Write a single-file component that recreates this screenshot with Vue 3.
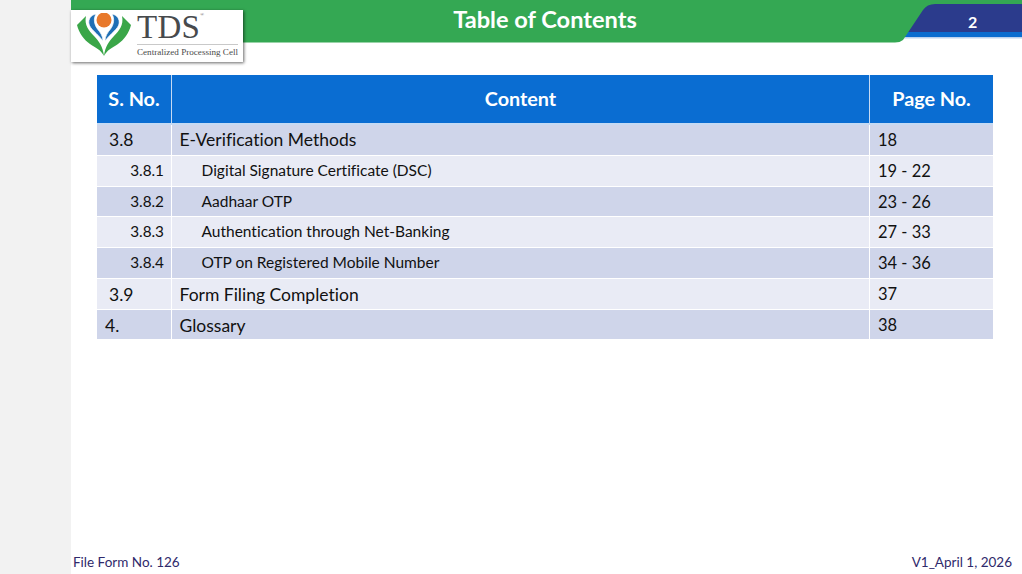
<script setup>
const rows = [
  { no: '3.8', text: 'E-Verification Methods', page: '18', kind: 'main', tone: 'dark' },
  { no: '3.8.1', text: 'Digital Signature Certificate (DSC)', page: '19 - 22', kind: 'sub', tone: 'light' },
  { no: '3.8.2', text: 'Aadhaar OTP', page: '23 - 26', kind: 'sub', tone: 'dark' },
  { no: '3.8.3', text: 'Authentication through Net-Banking', page: '27 - 33', kind: 'sub', tone: 'light' },
  { no: '3.8.4', text: 'OTP on Registered Mobile Number', page: '34 - 36', kind: 'sub', tone: 'dark' },
  { no: '3.9', text: 'Form Filing Completion', page: '37', kind: 'main low', tone: 'light' },
  { no: '4.', text: 'Glossary', page: '38', kind: 'top low', tone: 'dark' }
]
const sides = ['', 'matrix(-1 0 0 1 54 0)']
</script>

<template>
  <div class="page">
    <aside class="strip"></aside>
    <main class="slide">
      <header class="banner">
        <svg class="banner-art" width="951" height="43" viewBox="0 0 951 43">
          <path d="M0 0H951V4H0Z" fill="#34a853" />
          <path d="M830 32H951V37H830Z" fill="#0a6ccf" />
          <path d="M830 37H951V38.500H830Z" fill="#bcd2ee" />
          <path d="M834 32L852 4H951V32Z" fill="#2b3b8c" />
          <path d="M0 0H951V4H864Q856 4 852 10L832 40Q829 42.500 824 42.500H0Z" fill="#34a853" />
        </svg>
        <h1 class="title">Table of Contents</h1>
        <span class="page-no">2</span>
        <div class="logo">
          <svg class="logo-mark" width="54" height="44" viewBox="0 0 54 44">
            <g v-for="side in sides" :key="side" :transform="side">
              <path d="M0 12C3 9 6 6 9 3C7 12 12 18 17 23C22 28 26 34 27 43C24 37 19 35 13 31C7 27 2 20 0 12Z" fill="#3aa648" />
              <path d="M19 1C14 2 11 6 12 11C13 16 20 20 26 28C26 23 23 19 20.500 16C17.500 12 16 6 19 1Z" fill="#1f6fb5" stroke="#fff" stroke-width=".7" />
            </g>
            <circle cx="27" cy="7" r="7.500" fill="#e8792c" />
          </svg>
          <div class="logo-type">
            <span class="logo-tds">TDS<sup>®</sup></span>
            <span class="logo-sub">Centralized Processing Cell</span>
          </div>
        </div>
      </header>

      <section class="toc">
        <div class="toc-row toc-head">
          <div>S. No.</div>
          <div>Content</div>
          <div>Page No.</div>
        </div>
        <div v-for="row in rows" :key="row.no" class="toc-row" :class="[row.kind, row.tone]">
          <div class="cell-no">{{ row.no }}</div>
          <div class="cell-text">{{ row.text }}</div>
          <div class="cell-page">{{ row.page }}</div>
        </div>
      </section>

      <footer class="foot">
        <span>File Form No. 126</span>
        <span>V1_April 1, 2026</span>
      </footer>
    </main>
  </div>
</template>

<style>
html, body { margin: 0; background: #fff; }
</style>

<style scoped>
.page {
  display: flex;
  width: 1022px;
  height: 574px;
  overflow: hidden;
  font-family: Lato, "Open Sans", sans-serif;
  font-variant-ligatures: none;
  color: #111;
}
.strip { width: 71px; flex: none; background: #f2f2f2; }
.slide {
  flex: 1;
  display: flex;
  flex-direction: column;
  min-width: 0;
}
.banner { position: relative; height: 43px; flex: none; }
.banner-art { position: absolute; left: 0; top: 0; }
.title {
  position: relative;
  margin: 0;
  padding: 5px 3px 0 0;
  text-align: center;
  font-size: 23.600px;
  line-height: 28px;
  font-weight: 700;
  color: #fff;
}
.page-no {
  position: absolute;
  left: 897px;
  top: 13px;
  font-size: 16px;
  line-height: 18px;
  font-weight: 700;
  color: #fff;
}
.logo {
  position: absolute;
  left: 0;
  top: 10px;
  width: 172px;
  height: 52px;
  box-sizing: border-box;
  padding: 2px 0 0 6px;
  display: flex;
  gap: 6px;
  background: #fff;
  box-shadow: 1px 1px 3px rgba(0, 0, 0, .6);
  overflow: hidden;
}
.logo-mark { flex: none; margin-top: 1px; }
.logo-type { display: flex; flex-direction: column; }
.logo-tds {
  font-family: "Liberation Serif", serif;
  font-size: 33px;
  line-height: 31px;
  letter-spacing: .3px;
  color: #474a4d;
  border-bottom: 1px solid #c9c9c9;
  height: 32px;
}
.logo-tds sup { font-size: 5px; line-height: 0; vertical-align: 22px; }
.logo-sub {
  font-family: "Liberation Serif", serif;
  font-size: 9.100px;
  line-height: 14px;
  white-space: nowrap;
  color: #4a4a4a;
}
.toc {
  margin: 32px 0 0 26px;
  width: 896px;
  display: flex;
  flex-direction: column;
  gap: 1px;
}
.toc-row {
  display: grid;
  grid-template-columns: 74px 697px 123px;
  grid-template-rows: 100%;
  column-gap: 1px;
  height: 29.750px;
  font-size: 17.500px;
  line-height: 30px;
}
.toc-row > div { background: #e9ebf5; white-space: nowrap; overflow: hidden; }
.toc-row.dark > div { background: #cfd5ea; }
.toc-head {
  box-sizing: border-box;
  height: 50px;
  padding-bottom: 2px;
  margin-bottom: -1px;
  font-size: 19.800px;
  line-height: 47px;
  font-weight: 700;
  color: #fff;
  text-align: center;
  background: #c6daf3;
}
.toc-head > div { background: #0a6dd2; }
.cell-text { padding-left: 7.500px; }
.cell-page { padding-left: 8px; font-size: 16.500px; line-height: 31px; }
.main .cell-no { padding-left: 12px; }
.top .cell-no { padding-left: 8px; }
.low { line-height: 31px; }
.low .cell-page { line-height: 31px; }
.sub .cell-no { text-align: right; padding-right: 7px; font-size: 15.300px; line-height: 28px; }
.sub .cell-text { padding-left: 29.500px; font-size: 15.500px; line-height: 28px; }
.foot {
  margin-top: auto;
  height: 23px;
  padding: 0 10px 0 2px;
  display: flex;
  justify-content: space-between;
  font-size: 13.500px;
  line-height: 22px;
  color: #2f2a6b;
}
</style>
